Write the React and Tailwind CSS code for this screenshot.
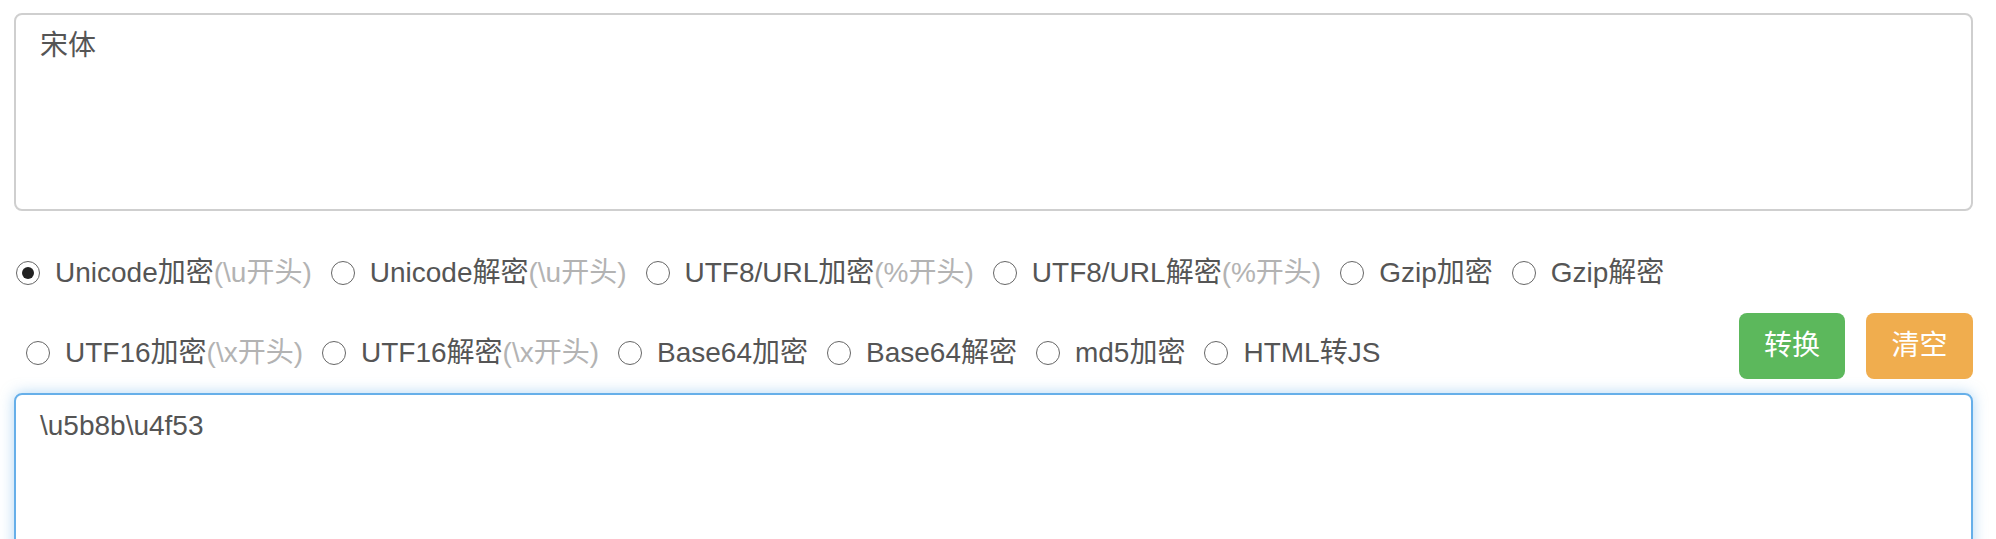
const font = { fontFamily: '"Liberation Sans", Arial, "Noto Sans CJK SC", sans-serif' };

const row1 = [
  { label: "Unicode加密", hint: "(\\u开头)", checked: true },
  { label: "Unicode解密", hint: "(\\u开头)" },
  { label: "UTF8/URL加密", hint: "(%开头)" },
  { label: "UTF8/URL解密", hint: "(%开头)" },
  { label: "Gzip加密" },
  { label: "Gzip解密" },
];

const row2 = [
  { label: "UTF16加密", hint: "(\\x开头)" },
  { label: "UTF16解密", hint: "(\\x开头)" },
  { label: "Base64加密" },
  { label: "Base64解密" },
  { label: "md5加密" },
  { label: "HTML转JS" },
];

function Radio({ label, hint, checked }) {
  return (
    <label className="flex items-center gap-[15px] mr-[19px] h-[40px] whitespace-nowrap">
      <span className="flex h-[24px] w-[24px] items-center justify-center rounded-full border-[1.5px] border-[#666] bg-white">
        {checked && <span className="h-[12px] w-[12px] rounded-full bg-[#222]" />}
      </span>
      <span className="text-[28px] leading-[40px] text-[#555]">
        {label}
        {hint && <span className="text-[#b3b3b3]">{hint}</span>}
      </span>
    </label>
  );
}

export default function App() {
  return (
    <div className="bg-white pl-[14px] pr-[23px] pt-[13px] h-[539px] overflow-hidden" style={font}>
      <textarea
        readOnly
        defaultValue="宋体"
        className="block h-[198px] w-full resize-none rounded-[8px] border-2 border-[#cfcfcf] px-[24px] py-[11px] text-[28px] leading-[40px] text-[#555] outline-none"
        style={font}
      />

      <div className="mt-[42px] flex pl-[2px]">
        {row1.map((r) => (
          <Radio key={r.label} {...r} />
        ))}
      </div>

      <div className="mt-[20px] flex items-start justify-between">
        <div className="flex pl-[12px] pt-[20px]">
          {row2.map((r) => (
            <Radio key={r.label} {...r} />
          ))}
        </div>
        <div className="flex gap-[21px]">
          <button className="h-[66px] w-[106px] rounded-[8px] bg-[#5cb85c] text-[28px] text-white">
            转换
          </button>
          <button className="h-[66px] w-[107px] rounded-[8px] bg-[#f0ad4e] text-[28px] text-white">
            清空
          </button>
        </div>
      </div>

      <textarea
        readOnly
        defaultValue={"\\u5b8b\\u4f53"}
        className="mt-[14px] block h-[200px] w-full resize-none rounded-[8px] border-2 border-[#66afe9] px-[24px] py-[11px] text-[28px] leading-[40px] text-[#555] shadow-[0_0_14px_rgba(102,175,233,0.5)] outline-none"
        style={font}
      />
    </div>
  );
}
